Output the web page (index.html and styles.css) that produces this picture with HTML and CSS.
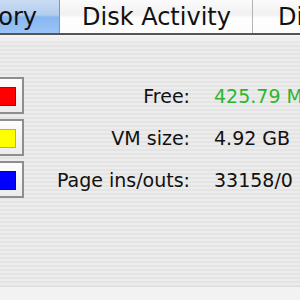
FILE: index.html
```html
<!DOCTYPE html>
<html lang="en">
<head>
    <meta charset="UTF-8">
    <title>System Memory</title>
    <link rel="stylesheet" href="styles.css">
</head>
<body>
    <div class="window">
        <nav class="tabs">
            <span class="tab tab-selected">Memory</span>
            <span class="tab tab-middle">Disk Activity</span>
            <span class="tab tab-last">Disk Usage</span>
        </nav>

        <section class="panel">
            <div class="row">
                <span class="well"><span class="swatch swatch-red"></span></span>
                <span class="label">Free:</span>
                <span class="value value-free">425.79 MB</span>
            </div>
            <div class="row">
                <span class="well"><span class="swatch swatch-yellow"></span></span>
                <span class="label">VM size:</span>
                <span class="value">4.92 GB</span>
            </div>
            <div class="row">
                <span class="well"><span class="swatch swatch-blue"></span></span>
                <span class="label">Page ins/outs:</span>
                <span class="value">33158/0</span>
            </div>
        </section>

        <div class="bottom"></div>
    </div>
</body>
</html>
```

FILE: styles.css
```css
body {
    margin: 0;
    width: 300px;
    height: 300px;
    overflow: hidden;
    font-family: 'DejaVu Sans', 'Verdana', sans-serif;
    color: #111;
    background: #e8e8e8;
}
.window {
    display: flex;
    flex-direction: column;
    height: 300px;
}
.tabs {
    display: flex;
    height: 33px;
    border-bottom: 2px solid #555;
    white-space: nowrap;
    overflow: hidden;
    background: linear-gradient(#fbfbfb, #f1f1f1 45%, #fefefe 55%, #fdfdfd);
}
.tab {
    flex: none;
    display: flex;
    align-items: center;
    font-size: 24px;
    border-right: 1px solid #b4b4b4;
}
.tab-selected {
    width: 60px;
    box-sizing: border-box;
    padding-right: 22px;
    justify-content: flex-end;
    overflow: hidden;
    border-right: 1px solid #6c9ccf;
    background: linear-gradient(#c9dcf3, #b3cdee 45%, #87b6f0 52%, #9cc5f6);
}
.tab-middle {
    padding: 0 21px 0 22px;
}
.tab-last {
    padding: 0 22px 0 25px;
}
.panel {
    flex: 1;
    display: flex;
    flex-direction: column;
    gap: 5px;
    padding-top: 42px;
    background:
        linear-gradient(#f6f6f6, rgba(232, 232, 232, 0) 8px),
        repeating-linear-gradient(#ececec 0 2px, #e4e4e4 2px 4px);
}
.row {
    display: grid;
    grid-template-columns: 24px 166px auto;
    align-items: center;
    height: 37px;
    font-size: 19px;
    white-space: nowrap;
}
.well {
    box-sizing: border-box;
    width: 36px;
    height: 37px;
    margin-left: -12px;
    padding: 7px;
    border: 2px solid #8e8e8e;
    background: linear-gradient(#fdfdfd, #ececec);
}
.swatch {
    display: block;
    box-sizing: border-box;
    width: 18px;
    height: 19px;
    margin: 1px 0 0 1px;
    border: 1px solid rgba(0, 0, 0, 0.25);
}
.swatch-red { background: #ff0000; }
.swatch-yellow { background: #ffff00; }
.swatch-blue { background: #0000ff; }
.label {
    text-align: right;
}
.value {
    padding-left: 24px;
}
.value-free {
    color: #2eb52e;
}
.bottom {
    height: 13px;
    border-top: 1px solid #dcdcdc;
    background: #f2f2f2;
}
```
